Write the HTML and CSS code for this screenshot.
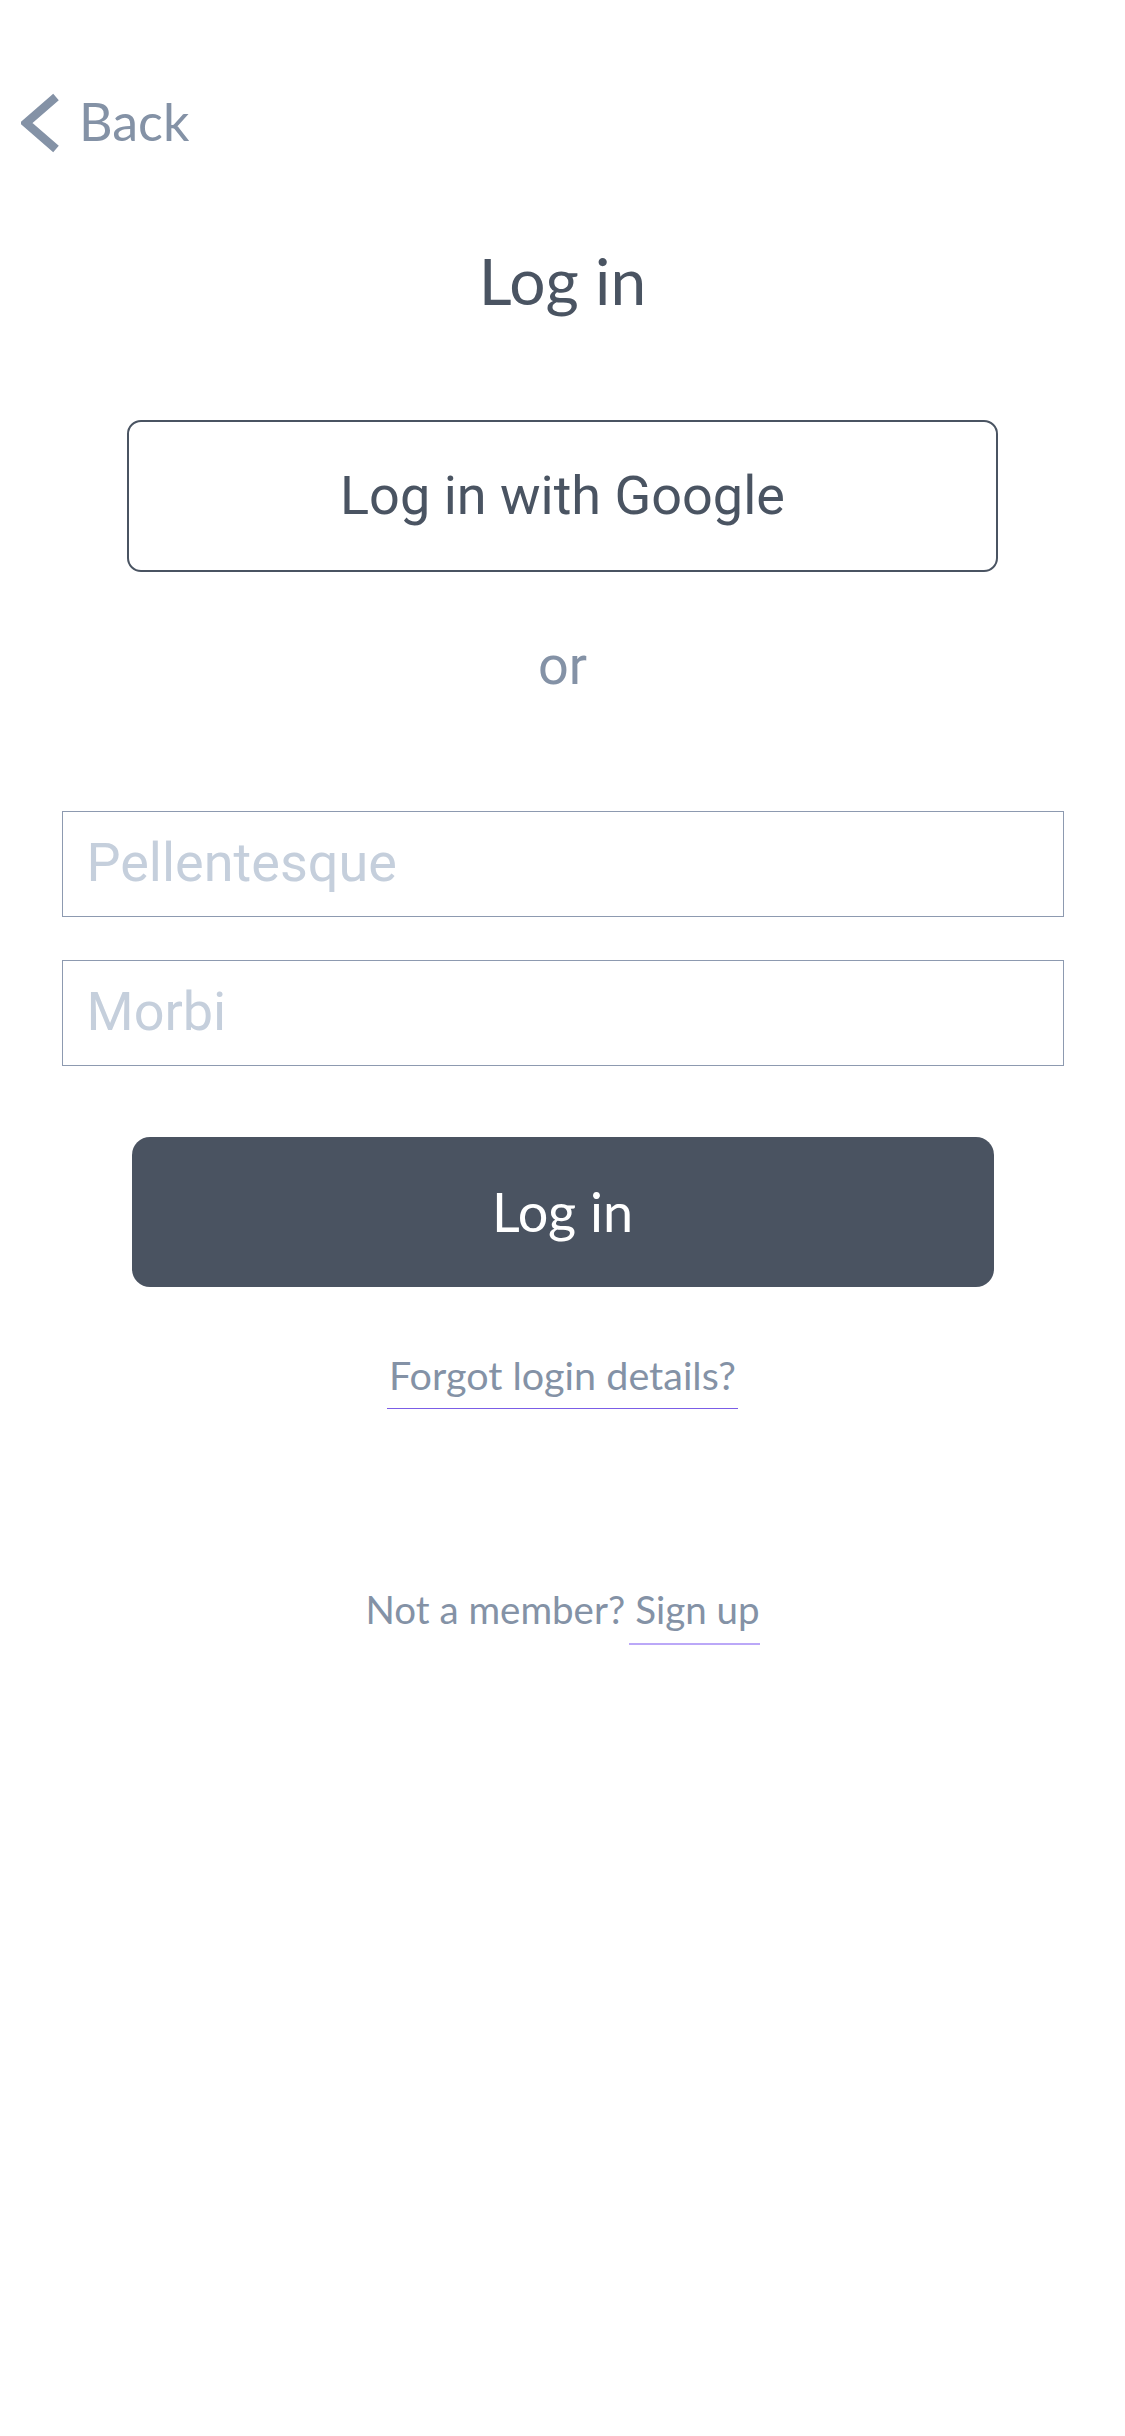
FILE: index.html
```html
<!DOCTYPE html>
<html lang="en">
<head>
<meta charset="utf-8">
<title>Log in</title>
<link rel="stylesheet" href="styles.css">
</head>
<body>
<div class="page">
  <header class="topbar">
    <a class="back" href="#">
      <svg class="back-icon" viewBox="0 0 40 64" width="40" height="64" aria-hidden="true">
        <polyline points="35,7 5,33 35,59" fill="none" stroke="#8492a6" stroke-width="8.5" stroke-linejoin="miter"/>
      </svg>
      <span class="back-text">Back</span>
    </a>
  </header>

  <h1 class="title">Log in</h1>

  <button class="google-btn" type="button">Log in with Google</button>

  <div class="or">or</div>

  <form class="form">
    <input class="field" type="text" placeholder="Pellentesque">
    <input class="field" type="password" placeholder="Morbi">
    <button class="login-btn" type="button">Log in</button>
  </form>

  <div class="forgot-row">
    <a class="forgot" href="#">Forgot login details?</a>
  </div>

  <div class="signup-row">
    <span class="muted">Not a member?</span><a class="signup" href="#">Sign up</a>
  </div>
</div>
</body>
</html>
```

FILE: styles.css
```css
* {
  box-sizing: border-box;
}

html, body {
  margin: 0;
  padding: 0;
  background: #ffffff;
}

body {
  font-family: "Lato", "Liberation Sans", sans-serif;
  color: #4a5462;
}

.page {
  width: 1125px;
  min-height: 2436px;
  display: flex;
  flex-direction: column;
  align-items: center;
}

.topbar {
  align-self: stretch;
  padding-top: 90px;
  height: 152px;
}

.back {
  display: flex;
  align-items: center;
  height: 62px;
  padding-left: 21px;
  text-decoration: none;
  color: #8492a6;
}

.back-icon {
  display: block;
  margin-top: 2px;
}

.back-text {
  margin-left: 18px;
  font-size: 52px;
  line-height: 62px;
}

.title {
  margin: 91px 0 0;
  font-size: 64px;
  font-weight: 400;
  line-height: 1.2;
  color: #4a5462;
}

.google-btn {
  margin-top: 100px;
  width: 871px;
  height: 152px;
  border: 2px solid #4a5462;
  border-radius: 14px;
  background: #ffffff;
  font-family: "Roboto", "Liberation Sans", sans-serif;
  font-size: 54px;
  color: #4a5462;
  padding: 0;
  display: flex;
  align-items: center;
  justify-content: center;
  line-height: 1.171;
}

.or {
  margin-top: 62px;
  font-family: "Roboto", "Liberation Sans", sans-serif;
  font-size: 54px;
  line-height: 1.171;
  color: #8492a6;
}

.form {
  margin-top: 114px;
  display: flex;
  flex-direction: column;
  align-items: center;
  gap: 43px;
}

.field {
  width: 1002px;
  height: 106px;
  margin: 0;
  border: 1.5px solid #8d9ab0;
  border-radius: 0;
  padding: 0 0 4px 24px;
  font-family: "Roboto", "Liberation Sans", sans-serif;
  font-size: 54px;
  color: #4a5462;
  background: #ffffff;
  outline: none;
}

.field::placeholder {
  color: #c5cfdc;
  opacity: 1;
}

.login-btn {
  margin-top: 28px;
  width: 862px;
  height: 150px;
  border: none;
  border-radius: 18px;
  background: #4a5361;
  color: #ffffff;
  font-family: "Lato", "Liberation Sans", sans-serif;
  font-size: 54px;
  line-height: 1.2;
  padding: 0;
}

.forgot-row {
  margin-top: 64px;
}

.forgot {
  display: inline-block;
  font-size: 39.5px;
  line-height: 1.2;
  padding: 0 2px 10px;
  border-bottom: 1px solid #7b5de6;
  color: #8492a6;
  text-decoration: none;
}

.signup-row {
  margin-top: 176px;
  display: flex;
  align-items: flex-start;
  font-size: 38.5px;
  line-height: 48px;
  color: #8492a6;
}

.muted {
  display: inline-block;
}

.signup {
  display: inline-block;
  margin-left: 4px;
  padding: 0 0 10px 6px;
  border-bottom: 2px solid #bba8f8;
  color: #8492a6;
  text-decoration: none;
}
```
